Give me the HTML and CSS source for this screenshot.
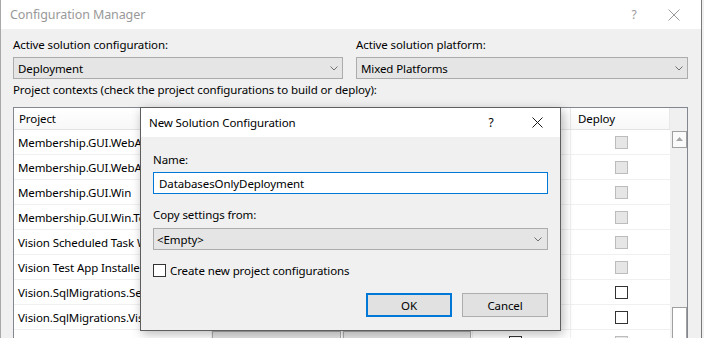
FILE: index.html
```html
<!DOCTYPE html>
<html>
<head>
<meta charset="utf-8">
<link rel="stylesheet" href="styles.css">
</head>
<body>
<div class="window">
  <div class="titlebar">
    <span class="title">Configuration Manager</span>
    <span class="tb-help">?</span>
    <span class="tb-close"><svg width="12" height="12" viewBox="0 0 12 12"><path d="M0.5 0.5 L11.5 11.5 M11.5 0.5 L0.5 11.5" stroke="#9a9a9a" stroke-width="1" fill="none"/></svg></span>
  </div>
  <div class="content">
    <div class="selectors">
      <div class="field field-config">
        <div class="label">Active solution configuration:</div>
        <div class="combo"><span class="combo-text">Deployment</span><svg class="chev" width="8" height="5" viewBox="0 0 8 5"><polyline points="0.5,0.5 4,4 7.5,0.5" fill="none" stroke="#707070" stroke-width="1"/></svg></div>
      </div>
      <div class="field field-platform">
        <div class="label">Active solution platform:</div>
        <div class="combo"><span class="combo-text">Mixed Platforms</span><svg class="chev" width="8" height="5" viewBox="0 0 8 5"><polyline points="0.5,0.5 4,4 7.5,0.5" fill="none" stroke="#707070" stroke-width="1"/></svg></div>
      </div>
    </div>
    <div class="label contexts">Project contexts (check the project configurations to build or deploy):</div>
    <div class="grid">
      <div class="grid-main">
        <div class="row header">
          <div class="cell c-project">Project</div>
          <div class="cell c-config">Configuration</div>
          <div class="cell c-platform">Platform</div>
          <div class="cell c-build">Build</div>
          <div class="cell c-deploy">Deploy</div>
        </div>
        <div class="row">
          <div class="cell c-project">Membership.GUI.WebApi</div>
          <div class="cell c-config"><div class="cell-combo">Deployment</div></div>
          <div class="cell c-platform"><div class="cell-combo">Any CPU</div></div>
          <div class="cell c-build"><span class="cb"></span></div>
          <div class="cell c-deploy"><span class="cb cb-off"></span></div>
        </div>
        <div class="row">
          <div class="cell c-project">Membership.GUI.WebApp</div>
          <div class="cell c-config"><div class="cell-combo">Deployment</div></div>
          <div class="cell c-platform"><div class="cell-combo">Any CPU</div></div>
          <div class="cell c-build"><span class="cb"></span></div>
          <div class="cell c-deploy"><span class="cb cb-off"></span></div>
        </div>
        <div class="row">
          <div class="cell c-project">Membership.GUI.Win</div>
          <div class="cell c-config"><div class="cell-combo">Deployment</div></div>
          <div class="cell c-platform"><div class="cell-combo">Any CPU</div></div>
          <div class="cell c-build"><span class="cb"></span></div>
          <div class="cell c-deploy"><span class="cb cb-off"></span></div>
        </div>
        <div class="row">
          <div class="cell c-project">Membership.GUI.Win.Tests</div>
          <div class="cell c-config"><div class="cell-combo">Deployment</div></div>
          <div class="cell c-platform"><div class="cell-combo">Any CPU</div></div>
          <div class="cell c-build"><span class="cb"></span></div>
          <div class="cell c-deploy"><span class="cb cb-off"></span></div>
        </div>
        <div class="row">
          <div class="cell c-project">Vision Scheduled Task Worker</div>
          <div class="cell c-config"><div class="cell-combo">Deployment</div></div>
          <div class="cell c-platform"><div class="cell-combo">Any CPU</div></div>
          <div class="cell c-build"><span class="cb"></span></div>
          <div class="cell c-deploy"><span class="cb cb-off"></span></div>
        </div>
        <div class="row">
          <div class="cell c-project">Vision Test App Installer</div>
          <div class="cell c-config"><div class="cell-combo">Deployment</div></div>
          <div class="cell c-platform"><div class="cell-combo">Any CPU</div></div>
          <div class="cell c-build"><span class="cb"></span></div>
          <div class="cell c-deploy"><span class="cb cb-off"></span></div>
        </div>
        <div class="row">
          <div class="cell c-project">Vision.SqlMigrations.Setup</div>
          <div class="cell c-config"><div class="cell-combo">Deployment</div></div>
          <div class="cell c-platform"><div class="cell-combo">Any CPU</div></div>
          <div class="cell c-build"><span class="cb"></span></div>
          <div class="cell c-deploy"><span class="cb"></span></div>
        </div>
        <div class="row">
          <div class="cell c-project">Vision.SqlMigrations.Vision</div>
          <div class="cell c-config"><div class="cell-combo">Deployment</div></div>
          <div class="cell c-platform"><div class="cell-combo">Any CPU</div></div>
          <div class="cell c-build"><span class="cb"></span></div>
          <div class="cell c-deploy"><span class="cb"></span></div>
        </div>
        <div class="row">
          <div class="cell c-project"></div>
          <div class="cell c-config"><div class="cell-combo"></div></div>
          <div class="cell c-platform"><div class="cell-combo"></div></div>
          <div class="cell c-build"><span class="cb"></span></div>
          <div class="cell c-deploy"><span class="cb cb-off"></span></div>
        </div>
      </div>
      <div class="scrollbar">
        <div class="sb-btn"><svg width="7" height="4" viewBox="0 0 7 4"><polygon points="0,4 3.5,0 7,4" fill="#a6a6a6"/></svg></div>
        <div class="sb-track"></div>
        <div class="sb-thumb"></div>
      </div>
    </div>
  </div>

  <div class="dialog">
    <div class="dlg-titlebar">
      <span class="dlg-title">New Solution Configuration</span>
      <span class="dlg-help">?</span>
      <span class="dlg-close"><svg width="11" height="11" viewBox="0 0 11 11"><path d="M0.5 0.5 L10.5 10.5 M10.5 0.5 L0.5 10.5" stroke="#1a1a1a" stroke-width="1" fill="none"/></svg></span>
    </div>
    <div class="dlg-body">
      <div class="label dlg-label-name">Name:</div>
      <div class="textbox">DatabasesOnlyDeployment</div>
      <div class="label dlg-label-copy">Copy settings from:</div>
      <div class="combo dlg-combo"><span class="combo-text">&lt;Empty&gt;</span><svg class="chev" width="8" height="5" viewBox="0 0 8 5"><polyline points="0.5,0.5 4,4 7.5,0.5" fill="none" stroke="#707070" stroke-width="1"/></svg></div>
      <label class="check-row"><span class="cb cb-dlg"></span><span>Create new project configurations</span></label>
      <div class="buttons">
        <div class="btn btn-default">OK</div>
        <div class="btn">Cancel</div>
      </div>
    </div>
  </div>
</div>
</body>
</html>
```

FILE: styles.css
```css
* { box-sizing: border-box; }

html, body {
  margin: 0;
  padding: 0;
  background: #f0f0f0;
}

body {
  font-family: "Noto Sans", "Open Sans", sans-serif;
  font-size: 11.5px;
  letter-spacing: -0.1px;
  color: #000;
  width: 704px;
  height: 338px;
  overflow: hidden;
}

.window {
  position: relative;
  width: 702px;
  height: 338px;
  background: #f0f0f0;
  border-left: 1px solid #a8a8a8;
  border-right: 1px solid #7a7a7a;
  overflow: hidden;
}

/* ---------- main title bar ---------- */
.titlebar {
  height: 29px;
  background: #fff;
  display: flex;
  align-items: center;
}

.title {
  flex: 1;
  padding-left: 9px;
  color: #999;
  font-size: 12.5px;
  line-height: 29px;
}

.tb-help {
  width: 26px;
  text-align: center;
  color: #9a9a9a;
  font-size: 12px;
  margin-right: 8px;
}

.tb-close {
  width: 46px;
  display: flex;
  justify-content: center;
  padding-right: 8px;
}

/* ---------- content ---------- */
.content {
  padding: 8px 13px 0 12px;
}

.label {
  line-height: 16px;
  height: 16px;
  white-space: nowrap;
}

.selectors {
  display: flex;
  gap: 13px;
}

.field-config { width: 330px; }
.field-platform { width: 332px; }

.field .label { margin-bottom: 4px; }

.combo {
  height: 22px;
  background: #e5e5e5;
  border: 1px solid #acacac;
  display: flex;
  align-items: center;
  padding: 0 4px 0 4px;
}

.combo-text {
  flex: 1;
  white-space: nowrap;
}

.chev { flex: none; }

.contexts {
  margin-top: 3px;
  margin-bottom: 9px;
}

/* ---------- grid ---------- */
.grid {
  display: flex;
  width: 675px;
  height: 260px;
  border: 1px solid #828790;
  background: #fff;
}

.grid-main {
  width: 656px;
  overflow: hidden;
}

.row {
  display: grid;
  grid-template-columns: 198px 131px 130px 98px 99px;
  height: 25px;
}

.row .cell {
  border-bottom: 1px solid #f0f0f0;
  border-right: 1px solid #f0f0f0;
  display: flex;
  align-items: center;
  overflow: hidden;
  white-space: nowrap;
}

.row .cell:last-child { border-right: none; }

.row.header {
  height: 22px;
  background: linear-gradient(#ffffff, #f7f7f7);
}

.row.header .cell {
  border-bottom: 1px solid #e3e3e3;
  border-right: 1px solid #e8e8e8;
  padding-left: 5px;
}

.row.header .c-deploy { padding-left: 7px; }

.c-project { padding-left: 4px; }

.c-config, .c-platform { padding: 1px 1px 1px 0; }

.cell-combo {
  width: 100%;
  height: 100%;
  background: #e6e6e6;
  border: 1px solid #adadad;
  padding-left: 4px;
  display: flex;
  align-items: center;
}

.c-build, .c-deploy { justify-content: center; }
.row.header .c-build, .row.header .c-deploy { justify-content: flex-start; }

.cb {
  display: inline-block;
  width: 13px;
  height: 13px;
  border: 1px solid #333;
  background: #fff;
  flex: none;
}

.c-deploy .cb { margin-left: 2px; }
.c-build .cb { margin-left: -12px; }

.cb-off {
  background: #e6e6e6;
  border-color: #bcbcbc;
}

.scrollbar {
  width: 17px;
  background: #f0f0f0;
  display: flex;
  flex-direction: column;
  padding-top: 23px;
}

.sb-btn {
  width: 15px;
  height: 17px;
  margin-left: 2px;
  background: #fafafa;
  border: 1px solid #a0a0a0;
  display: flex;
  align-items: center;
  justify-content: center;
}

.sb-track { height: 160px; }

.sb-thumb {
  width: 15px;
  height: 60px;
  margin-left: 2px;
  background: #fff;
  border: 1px solid #a0a0a0;
}

/* ---------- dialog ---------- */
.dialog {
  position: absolute;
  left: 139px;
  top: 107px;
  width: 421px;
  height: 224px;
  border: 1px solid #5e5e5e;
  background: #f0f0f0;
  box-shadow: 2px 3px 10px rgba(0, 0, 0, 0.28);
  display: flex;
  flex-direction: column;
}

.dlg-titlebar {
  height: 29px;
  background: #fff;
  display: flex;
  align-items: center;
}

.dlg-title {
  flex: 1;
  padding-left: 8px;
}

.dlg-help {
  width: 46px;
  text-align: center;
  font-size: 12px;
}

.dlg-close {
  width: 46px;
  display: flex;
  justify-content: center;
}

.dlg-body {
  padding: 15px 12px 0 12px;
  display: flex;
  flex-direction: column;
}

.dlg-label-name { margin-bottom: 4px; }

.textbox {
  height: 22px;
  background: #fff;
  border: 1px solid #0078d7;
  padding-left: 5px;
  display: flex;
  align-items: center;
  white-space: nowrap;
}

.dlg-label-copy {
  margin-top: 13px;
  margin-bottom: 5px;
}

.dlg-combo { padding-left: 3px; padding-right: 5px; }

.check-row {
  margin-top: 12px;
  height: 16px;
  display: flex;
  align-items: center;
  gap: 4px;
}

.cb-dlg { border-color: #333; }

.buttons {
  margin-top: 15px;
  display: flex;
  justify-content: flex-end;
  gap: 10px;
}

.btn {
  width: 86px;
  height: 24px;
  background: #e1e1e1;
  border: 1px solid #adadad;
  display: flex;
  align-items: center;
  justify-content: center;
}

.btn-default {
  border: 2px solid #0078d7;
}
```
